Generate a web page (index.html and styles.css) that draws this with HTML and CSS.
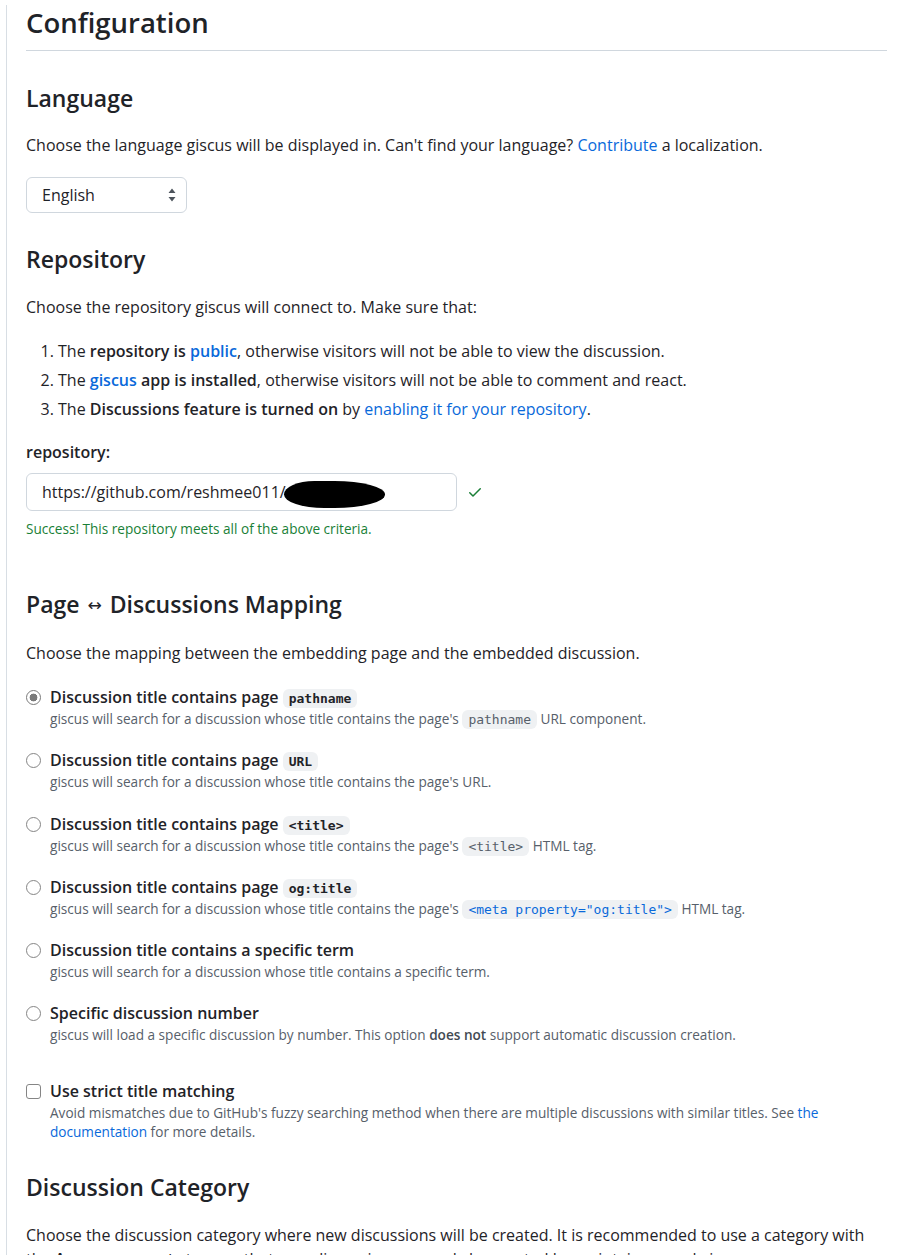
FILE: index.html
```html
<!DOCTYPE html>
<html lang="en">
<head>
<meta charset="utf-8">
<title>giscus configuration</title>
<link rel="stylesheet" href="styles.css">
</head>
<body>
<main class="page">
  <h1 class="title">Configuration</h1>

  <h2 class="heading first">Language</h2>
  <p class="text">Choose the language giscus will be displayed in. Can't find your language? <a class="link" href="#">Contribute</a> a localization.</p>
  <div class="select">
    <span>English</span>
    <svg class="select-arrows" width="8" height="14" viewBox="0 0 8 14"><path d="M4 0.5 L7.5 5 H0.5 Z M4 13.5 L0.5 9 H7.5 Z" fill="#4d545c"/></svg>
  </div>

  <h2 class="heading repo">Repository</h2>
  <p class="text">Choose the repository giscus will connect to. Make sure that:</p>
  <ol class="list">
    <li>The <strong>repository is</strong> <a class="link strong" href="#">public</a>, otherwise visitors will not be able to view the discussion.</li>
    <li>The <a class="link strong" href="#">giscus</a> <strong>app is installed</strong>, otherwise visitors will not be able to comment and react.</li>
    <li>The <strong>Discussions feature is turned on</strong> by <a class="link" href="#">enabling it for your repository</a>.</li>
  </ol>
  <div class="label">repository:</div>
  <div class="field-row">
    <div class="field"><span>https://github.com/reshmee011/</span><span class="blob"></span></div>
    <svg class="check" width="16" height="16" viewBox="0 0 16 16"><path fill="#1a7f37" d="M13.78 4.22a.75.75 0 0 1 0 1.06l-7.25 7.25a.75.75 0 0 1-1.06 0L2.22 9.28a.751.751 0 0 1 .018-1.042.751.751 0 0 1 1.042-.018L6 10.94l6.72-6.72a.75.75 0 0 1 1.06 0Z"/></svg>
  </div>
  <p class="success">Success! This repository meets all of the above criteria.</p>

  <h2 class="heading mapping">Page <span class="arrow">↔</span> Discussions Mapping</h2>
  <p class="text">Choose the mapping between the embedding page and the embedded discussion.</p>

  <div class="options">
    <div class="option">
      <span class="radio checked"></span>
      <div class="option-body">
        <div class="option-title">Discussion title contains page <code class="code">pathname</code></div>
        <div class="option-desc">giscus will search for a discussion whose title contains the page's <code class="code">pathname</code> URL component.</div>
      </div>
    </div>
    <div class="option">
      <span class="radio"></span>
      <div class="option-body">
        <div class="option-title">Discussion title contains page <code class="code">URL</code></div>
        <div class="option-desc">giscus will search for a discussion whose title contains the page's URL.</div>
      </div>
    </div>
    <div class="option">
      <span class="radio"></span>
      <div class="option-body">
        <div class="option-title">Discussion title contains page <code class="code">&lt;title&gt;</code></div>
        <div class="option-desc">giscus will search for a discussion whose title contains the page's <code class="code">&lt;title&gt;</code> HTML tag.</div>
      </div>
    </div>
    <div class="option">
      <span class="radio"></span>
      <div class="option-body">
        <div class="option-title">Discussion title contains page <code class="code">og:title</code></div>
        <div class="option-desc">giscus will search for a discussion whose title contains the page's <a href="#" class="code code-link">&lt;meta property="og:title"&gt;</a> HTML tag.</div>
      </div>
    </div>
    <div class="option">
      <span class="radio"></span>
      <div class="option-body">
        <div class="option-title">Discussion title contains a specific term</div>
        <div class="option-desc">giscus will search for a discussion whose title contains a specific term.</div>
      </div>
    </div>
    <div class="option">
      <span class="radio"></span>
      <div class="option-body">
        <div class="option-title">Specific discussion number</div>
        <div class="option-desc">giscus will load a specific discussion by number. This option <strong class="desc-strong">does not</strong> support automatic discussion creation.</div>
      </div>
    </div>
  </div>

  <div class="option strict">
    <span class="checkbox"></span>
    <div class="option-body">
      <div class="option-title">Use strict title matching</div>
      <div class="option-desc">Avoid mismatches due to GitHub's fuzzy searching method when there are multiple discussions with similar titles. See <a class="link" href="#">the documentation</a> for more details.</div>
    </div>
  </div>

  <h2 class="heading category">Discussion Category</h2>
  <p class="text">Choose the discussion category where new discussions will be created. It is recommended to use a category with the <strong>Announcements</strong> type so that new discussions can only be created by maintainers and giscus.</p>
</main>
</body>
</html>
```
FILE: styles.css
```css
html, body {
  margin: 0;
  padding: 0;
  background: #ffffff;
}

body {
  font-family: "Open Sans", "Noto Sans", sans-serif;
  font-size: 16px;
  line-height: 24px;
  color: #1f2328;
}

.page {
  margin-left: 6px;
  border-left: 1px solid #d8dee4;
  padding: 0 20px 0 19px;
  min-height: 1400px;
}

.title {
  margin: 5px 0 0;
  padding-bottom: 9px;
  border-bottom: 1px solid #d0d7de;
  font-size: 27.5px;
  line-height: 36px;
  font-weight: 600;
}

.heading {
  margin: 0 0 20px;
  font-size: 23px;
  line-height: 30px;
  font-weight: 600;
}

.heading.first { margin-top: 32px; }
.heading.repo { margin-top: 31px; margin-bottom: 21px; }
.heading.mapping { margin-top: 50px; margin-bottom: 21px; }
.heading.category { margin-top: 31px; margin-bottom: 21px; }

.arrow {
  display: inline-block;
  margin: 0 2px;
  font-family: "DejaVu Sans", sans-serif;
  font-size: 17px;
  font-weight: 400;
  vertical-align: 2px;
}

.text {
  margin: 0 0 20px;
}

.link {
  color: #0969da;
  text-decoration: none;
}

.link.strong {
  font-weight: 600;
}

strong {
  font-weight: 600;
}

.select {
  width: 161px;
  height: 36px;
  box-sizing: border-box;
  border: 1px solid #d0d7de;
  border-radius: 6px;
  padding: 0 10px 0 15px;
  display: flex;
  align-items: center;
  justify-content: space-between;
}

.select-arrows {
  display: block;
}

.list {
  margin: 0 0 19px;
  padding-left: 32px;
}

.list li + li {
  margin-top: 5px;
}

.label {
  font-weight: 600;
  margin-bottom: 9px;
}

.field-row {
  display: flex;
  align-items: center;
  gap: 10px;
}

.field {
  width: 431px;
  height: 38px;
  box-sizing: border-box;
  border: 1px solid #d0d7de;
  border-radius: 6px;
  padding: 0 15px;
  display: flex;
  align-items: center;
  white-space: nowrap;
}

.blob {
  display: inline-block;
  width: 101px;
  height: 27px;
  margin-left: -2px;
  margin-top: 5px;
  background: #000000;
  border-radius: 30% 50% 50% 40% / 50% 50% 50% 50%;
}

.check {
  display: block;
}

.success {
  margin: 8px 0 0;
  font-size: 13.6px;
  line-height: 20px;
  color: #1a7f37;
}

.options {
  margin-top: 16px;
  display: flex;
  flex-direction: column;
  gap: 19.3px;
}

.option {
  display: flex;
  align-items: flex-start;
}

.option-body {
  flex: 1;
  min-width: 0;
}

.option-title {
  font-weight: 600;
  line-height: 24px;
}

.option-desc {
  font-size: 13.6px;
  line-height: 20px;
  color: #57606a;
}

.strict .option-desc {
  line-height: 19px;
}

.desc-strong {
  color: #424a53;
}

.radio {
  flex: none;
  width: 15px;
  height: 15px;
  box-sizing: border-box;
  margin: 5px 9px 0 0;
  border: 1px solid #858585;
  border-radius: 50%;
  background: #ffffff;
}

.radio.checked {
  border-color: #7a7a7a;
  background: radial-gradient(circle, #7a7a7a 0 3.6px, #ffffff 4.2px);
}

.checkbox {
  flex: none;
  width: 15px;
  height: 15px;
  box-sizing: border-box;
  margin: 5px 9px 0 0;
  border: 1px solid #858585;
  border-radius: 3px;
  background: #ffffff;
}

.strict {
  margin-top: 34px;
}

.code {
  font-family: "DejaVu Sans Mono", monospace;
  font-size: 13px;
  line-height: 17px;
  padding: 2px 6px;
  border-radius: 6px;
  background: #eff1f3;
}

.option-title .code {
  color: #1f2328;
}

.option-desc .code {
  color: #57606a;
  font-weight: 400;
}

.option-desc .code-link {
  color: #0969da;
  text-decoration: none;
}
```
